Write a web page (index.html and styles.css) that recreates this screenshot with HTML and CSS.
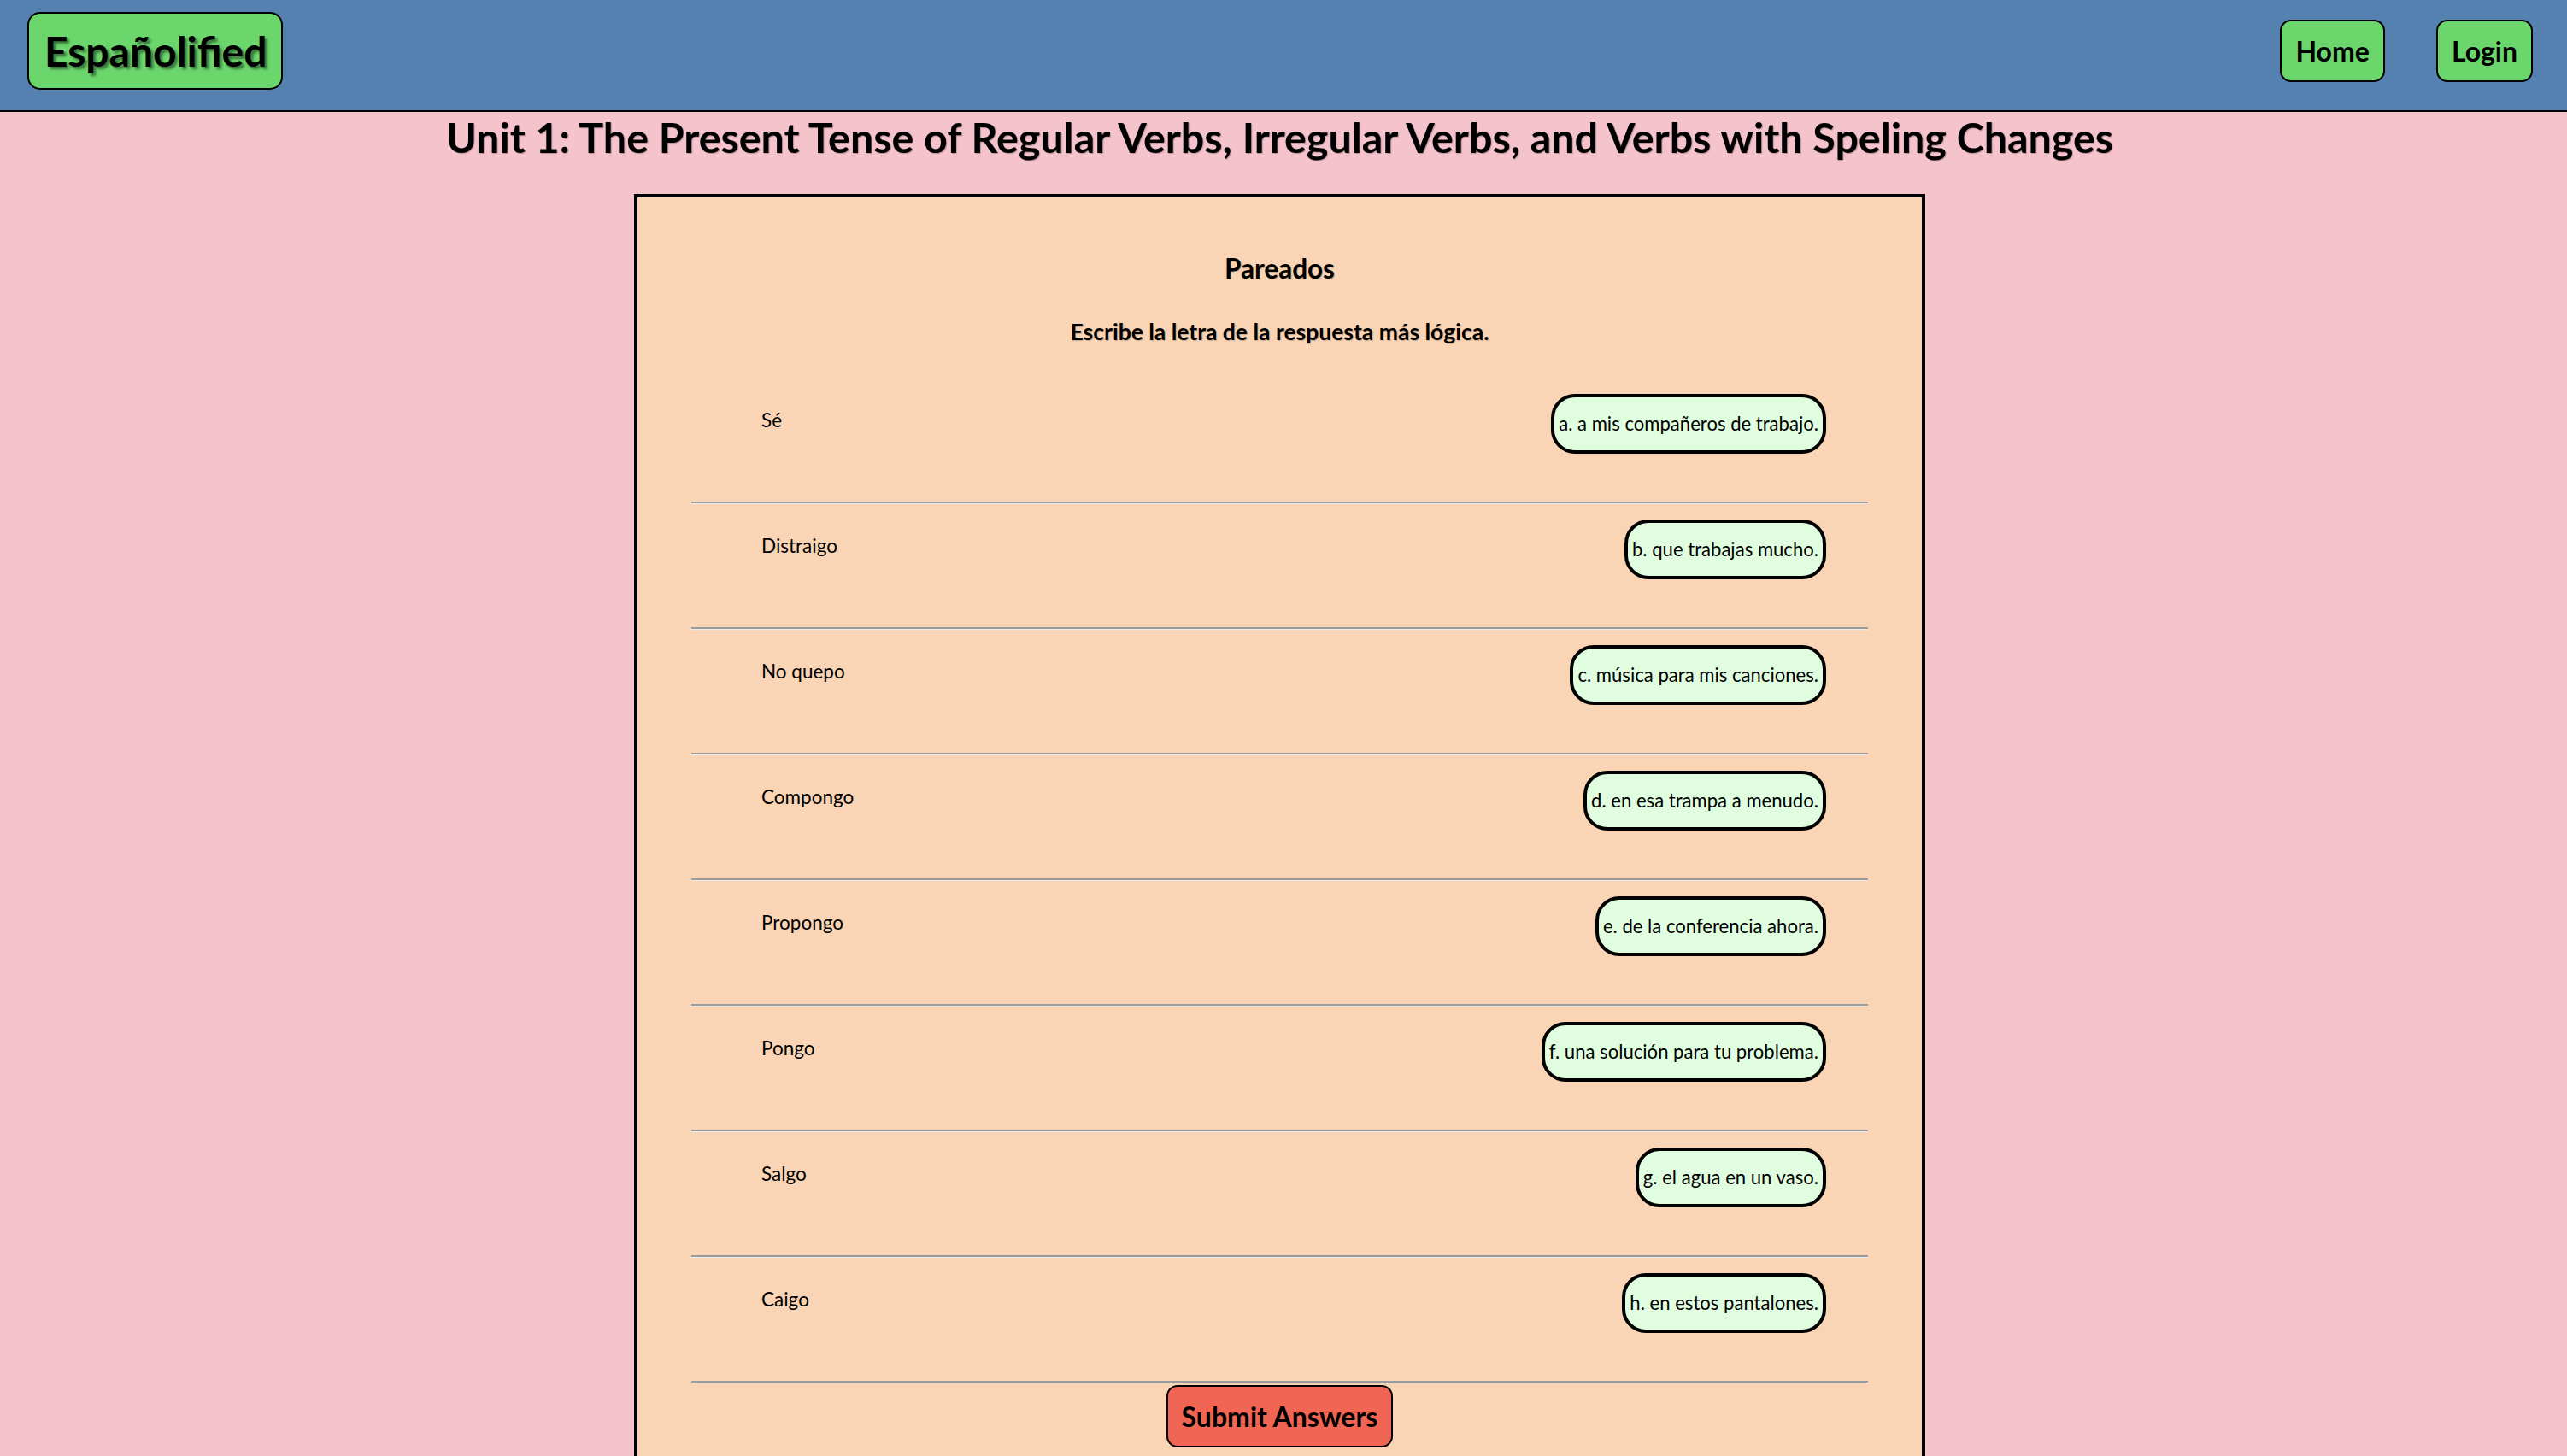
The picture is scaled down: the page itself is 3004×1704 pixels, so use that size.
FILE: index.html
```html
<!DOCTYPE html>
<html lang="es">
<head>
<meta charset="utf-8">
<title>Españolified</title>
<link rel="stylesheet" href="styles.css">
</head>
<body>
<header class="topbar">
  <a class="logo" href="#">Españolified</a>
  <nav class="nav">
    <a class="nav-btn" href="#">Home</a>
    <a class="nav-btn" href="#">Login</a>
  </nav>
</header>
<main class="main">
  <h1 class="unit-title">Unit 1: The Present Tense of Regular Verbs, Irregular Verbs, and Verbs with Speling Changes</h1>
  <section class="card">
    <h2 class="card-title">Pareados</h2>
    <h3 class="card-sub">Escribe la letra de la respuesta más lógica.</h3>
    <div class="rows">
      <div class="row"><span class="label">Sé</span><button class="choice">a. a mis compañeros de trabajo.</button></div>
      <hr class="sep">
      <div class="row"><span class="label">Distraigo</span><button class="choice">b. que trabajas mucho.</button></div>
      <hr class="sep">
      <div class="row"><span class="label">No quepo</span><button class="choice">c. música para mis canciones.</button></div>
      <hr class="sep">
      <div class="row"><span class="label">Compongo</span><button class="choice">d. en esa trampa a menudo.</button></div>
      <hr class="sep">
      <div class="row"><span class="label">Propongo</span><button class="choice">e. de la conferencia ahora.</button></div>
      <hr class="sep">
      <div class="row"><span class="label">Pongo</span><button class="choice">f. una solución para tu problema.</button></div>
      <hr class="sep">
      <div class="row"><span class="label">Salgo</span><button class="choice">g. el agua en un vaso.</button></div>
      <hr class="sep">
      <div class="row"><span class="label">Caigo</span><button class="choice">h. en estos pantalones.</button></div>
      <hr class="sep">
    </div>
    <div class="submit-wrap"><button class="submit">Submit Answers</button></div>
  </section>
</main>
</body>
</html>
```
FILE: styles.css
```css
* { box-sizing: border-box; }
html, body {
  margin: 0;
  padding: 0;
}
body {
  background: #f5c3cb;
  font-family: Lato, "Open Sans", "Liberation Sans", sans-serif;
  color: #000;
}
.topbar {
  display: flex;
  justify-content: space-between;
  align-items: flex-start;
  height: 131px;
  background: #5581b1;
  border-bottom: 2px solid #000;
  padding: 14px 40px 0 32px;
}
.logo {
  display: block;
  height: 91px;
  padding: 0 17px 0 18px;
  background: #6ad66c;
  border: 2px solid #000;
  border-radius: 15px;
  font-size: 48px;
  font-weight: 700;
  line-height: 87px;
  color: #000;
  text-decoration: none;
  text-shadow: 3px 3px 3px rgba(0, 0, 0, 0.45);
}
.nav {
  display: flex;
  gap: 60px;
  padding-top: 9px;
}
.nav-btn {
  display: block;
  height: 73px;
  padding: 0 16px;
  background: #6ad66c;
  border: 2px solid #000;
  border-radius: 13px;
  font-size: 32px;
  font-weight: 700;
  line-height: 69px;
  color: #000;
  text-decoration: none;
}
.main {
  padding-right: 9px;
  padding-bottom: 60px;
}
.unit-title {
  margin: 0 0 38px;
  font-size: 48.4px;
  line-height: 58px;
  font-weight: 700;
  text-align: center;
  text-shadow: 1px 1px 1px rgba(0, 0, 0, 0.25);
}
.card {
  width: 1511px;
  margin: 0 auto;
  background: #f9d5b5;
  border: 4px solid #000;
  padding: 65px 63px 40px;
}
.card-title {
  margin: 0;
  font-size: 31.5px;
  line-height: 37px;
  font-weight: 700;
  text-align: center;
  text-shadow: 1px 1px 1px rgba(0, 0, 0, 0.2);
}
.card-sub {
  margin: 40px 0 39px;
  font-size: 26.5px;
  line-height: 31px;
  font-weight: 700;
  text-align: center;
  text-shadow: 1px 1px 1px rgba(0, 0, 0, 0.2);
}
.row {
  display: flex;
  justify-content: space-between;
  align-items: flex-start;
  padding: 18px 49px 56px 82px;
}
.label {
  margin-top: 17px;
  font-size: 22.5px;
  line-height: 27px;
}
.choice {
  height: 70px;
  padding: 0 5px;
  background: #e0fde0;
  border: 4px solid #000;
  border-radius: 28px;
  font-family: inherit;
  font-size: 22.1px;
  line-height: 62px;
  color: #000;
}
.sep {
  margin: 0;
  height: 3px;
  border: 0;
  border-top: 2px solid #9b9b9b;
  border-bottom: 1px solid #ececec;
}
.submit-wrap {
  display: flex;
  justify-content: center;
  padding-top: 2px;
}
.submit {
  height: 73px;
  padding: 0 16px;
  background: #f06553;
  border: 2px solid #000;
  border-radius: 13px;
  font-family: inherit;
  font-size: 32px;
  font-weight: 700;
  line-height: 69px;
  color: #000;
}
```
